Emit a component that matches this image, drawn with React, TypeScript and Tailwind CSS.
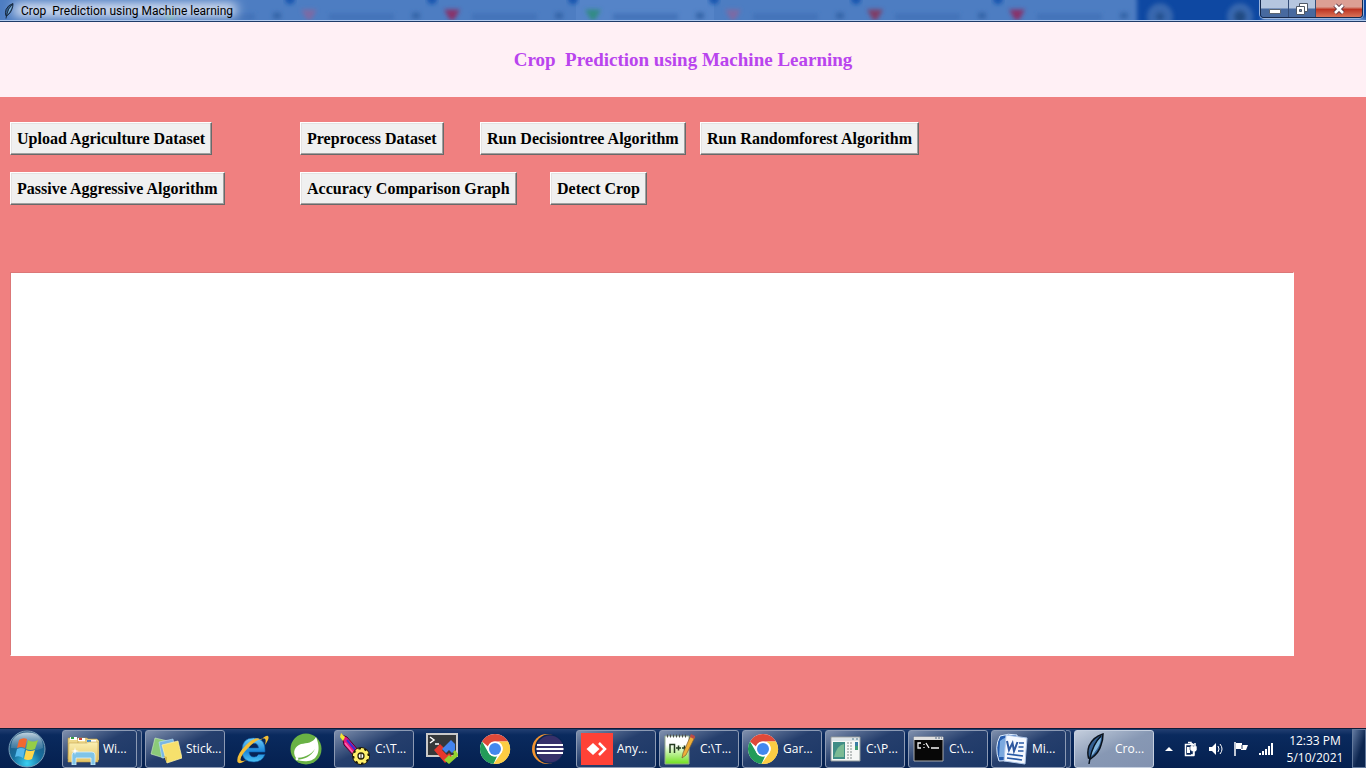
import React from "react";

type ArtProps = { children: React.ReactNode };

function Art({ children }: ArtProps) {
  return (
    <svg viewBox="0 0 32 32" className="h-8 w-8 shrink-0" aria-hidden="true">
      {children}
    </svg>
  );
}

function FolderIcon() {
  return (
    <Art>
      <defs>
        <linearGradient id="folder" x1="0" y1="0" x2="0" y2="1">
          <stop offset="0" stopColor="#fbf0b4" />
          <stop offset="1" stopColor="#e5c463" />
        </linearGradient>
      </defs>
      <path d="M1 5h9l2 2v19H1z" fill="#efd98a" stroke="#b9973f" strokeWidth=".6" />
      <path d="M3 4h7v3H3z" fill="#fff" />
      <path d="M4 4h3v2H4z" fill="#35a044" />
      <path d="M11 5h9l2 2v19H11z" fill="#f3df95" stroke="#c1a04a" strokeWidth=".6" />
      <path d="M11 5h7v3h-7z" fill="#fff" />
      <path d="M12 5h3v2h-3z" fill="#cf4432" />
      <path d="M19 6h11l2 2v19H19z" fill="#f5e3a0" stroke="#c1a04a" strokeWidth=".6" />
      <path d="M20 7h9v3h-9z" fill="#fff" />
      <path d="M20 7h4v2h-4z" fill="#3d8fd0" />
      <path d="M2 10h18l2-1h9v20H1z" fill="url(#folder)" stroke="#c2a34f" strokeWidth=".6" />
      <path d="M5 32V22q0-3 3-3h17q3 0 3 3v10h-4v-7H9v7z" fill="#7fc4e8" stroke="#d9f1fb" strokeWidth=".8" />
      <path d="M8 14l.7 3.300 3.300.7-3.300.7L8 22l-.7-3.300L4 18l3.300-.7z" fill="#fff" />
    </Art>
  );
}

function StickyIcon() {
  return (
    <Art>
      <path d="M5 5l13 3-4 17-13-4z" fill="#8bcb79" stroke="#d0ecc5" strokeWidth=".6" />
      <path d="M9 9l14-3 3 16-14 3z" fill="#79b7e4" stroke="#bfe0f6" strokeWidth=".6" />
      <path d="M12 12l16-4 4 17-15 5q-1-3-2-7z" fill="#f6e06c" stroke="#fff4ae" strokeWidth=".7" />
      <path d="M17 30l0-6-3-1z" fill="#d9bc45" />
    </Art>
  );
}

function ExplorerIcon() {
  return (
    <Art>
      <defs>
        <linearGradient id="ie" x1="0" y1="0" x2="0" y2="1">
          <stop offset="0" stopColor="#73d0fa" />
          <stop offset=".55" stopColor="#1b86d8" />
          <stop offset="1" stopColor="#4cc3f4" />
        </linearGradient>
      </defs>
      <path
        d="M28 19H12q.5 5 5 5 3 0 4.500-2.500H28Q25 29 17 29 5 29 5 17.500 5 5 16.500 5 29 5 28 19zM12 15h9.500q-.5-4.800-4.800-4.800T12 15z"
        fill="url(#ie)"
        stroke="#0d5aa8"
        strokeWidth=".6"
      />
      <path d="M24 7q5-5 7-4 2 2-3 9 1.500-6-.5-6.500Q21 5 12 14 3 23 3.500 27q1 2 6 0-7 5-9 2Q-1 22 9 12T24 7z" fill="#f2bd36" />
    </Art>
  );
}

function SpringIcon() {
  return (
    <Art>
      <circle cx="16" cy="16" r="15.500" fill="#69b245" />
      <path d="M26 4c5 11 3 23-8 24-5 1-9-1-11-1 7-1 14-3 18-11-4 6-12 9-19 9-4-6-1-12 5-14 6-1 12-1 15-7z" fill="#fff" />
      <circle cx="7" cy="26" r="1.400" fill="#fff" />
    </Art>
  );
}

function PaintToolIcon() {
  return (
    <Art>
      <path d="M3 2l5 2 12 14-5 5L5 12z" fill="#e8147c" stroke="#4a0731" />
      <path d="M8 7l10 12" stroke="#3430d4" strokeWidth="2" />
      <path d="M6 10l9 11" stroke="#ff69b0" strokeWidth="1.500" />
      <path d="M2 0l4 4-2 4-3-4z" fill="#f2e634" />
      <circle cx="22" cy="23" r="7" fill="none" stroke="#221d07" strokeWidth="4" />
      <circle cx="22" cy="23" r="6.800" fill="#fff06a" stroke="#fff06a" strokeWidth="2.600" strokeDasharray="3 2.300" />
      <circle cx="22" cy="23" r="3" fill="#fff" stroke="#292309" strokeWidth="1.300" />
      <path d="M22 20v6" stroke="#292309" />
    </Art>
  );
}

function TerminalBlocksIcon() {
  return (
    <Art>
      <path d="M0 0h32v24H0z" fill="#c9c9c9" />
      <path d="M2 2h28v20H2z" fill="#35383a" />
      <path d="M4 4l4 3-4 3M9 11h4" fill="none" stroke="#fff" strokeWidth="1.500" />
      <path d="M8 17l6-6 4 4-2 2 5 5 2-2 3 3-7 7z" fill="#e6382d" />
      <path d="M18 14l7-7 4 4v6l-3 3-3-3-3 3-4-4z" fill="#4384ee" />
      <path d="M18 27l5-5 2 2 3-3-1-2 2-2 3 4v2l-9 8z" fill="#94d22f" />
    </Art>
  );
}

function ChromeIcon() {
  return (
    <Art>
      <circle cx="16" cy="16" r="15" fill="#fff" />
      <path d="M3 8.500A15 15 0 0 1 29 8.500H16a7.500 7.500 0 0 0-7 5z" fill="#df4939" />
      <path d="M3 8.500l6.500 11.250A7.500 7.500 0 0 0 18 23.200L14.500 31A15 15 0 0 1 3 8.500z" fill="#239c59" />
      <path d="M29 8.500A15 15 0 0 1 14.500 31l8-11.250A7.500 7.500 0 0 0 20 9V8.500z" fill="#fccd43" />
      <circle cx="16" cy="16" r="7.500" fill="#fff" />
      <circle cx="16" cy="16" r="6" fill="#4388ee" />
    </Art>
  );
}

function EclipseIcon() {
  return (
    <Art>
      <circle cx="15" cy="16" r="15" fill="#f39430" />
      <circle cx="17.500" cy="16" r="14.800" fill="#0a2555" />
      <circle cx="18" cy="16" r="13.500" fill="#37306a" />
      <path d="M5 12h26M4.500 16h27M5 20h26" stroke="#fff" strokeWidth="1.800" />
    </Art>
  );
}

function AnyDeskIcon() {
  return (
    <Art>
      <path d="M0 0h32v32H0z" fill="#ff4237" />
      <path d="M12 10l6.500 6-6.500 6-6.500-6z" fill="#fff" />
      <path d="M18 10l6 6-6 6" fill="none" stroke="#fff" strokeWidth="2.500" />
    </Art>
  );
}

function NotepadIcon() {
  return (
    <Art>
      <defs>
        <linearGradient id="note" x1="0" y1="0" x2="0" y2="1">
          <stop offset=".3" stopColor="#fff" />
          <stop offset="1" stopColor="#6fe01c" />
        </linearGradient>
      </defs>
      <path d="M1 3h24v28H1z" fill="url(#note)" stroke="#98ad8f" />
      <path d="M3 3h20" stroke="#4d4d4d" strokeWidth="3" strokeDasharray="1 2" />
      <path d="M6 20V11.500h4.500V20M12 15h5M14.500 12.500v5M18 15h5M20.500 12.500v5" fill="none" stroke="#253b20" strokeWidth="1.500" />
      <path d="M27 2l4 2-9 18-4 3 1-5z" fill="#efae38" stroke="#7d5c2f" strokeWidth=".7" />
      <path d="M27 1l4 2-1 3-4-2z" fill="#b94a4a" />
    </Art>
  );
}

function WindowDocIcon() {
  return (
    <Art>
      <path d="M1 4h29v24H1z" fill="#f6f7f6" stroke="#8f9899" />
      <path d="M2 5h27v3H2z" fill="#dde5e8" />
      <path d="M22 6h2M26 6h2" stroke="#577e91" />
      <path d="M3 9h12v17H3z" fill="#408d86" />
      <path d="M4 24Q7 12 14 11v13z" fill="#7bba94" />
      <path d="M17 10h5M17 13h5M17 16h5M17 19h5M17 22h5M17 25h5" stroke="#858e8d" strokeDasharray="2 1" />
      <path d="M25 9h3v8h-3z" fill="#3d9b75" />
      <path d="M25 9h3v4h-3z" fill="#397ca4" />
    </Art>
  );
}

function ConsoleIcon() {
  return (
    <Art>
      <path d="M1 4h29v24H1z" fill="#070707" stroke="#aaa" />
      <path d="M1 4h29v3H1z" fill="#dfdfdf" />
      <path d="M22 5h2M25 5h2M28 5h1" stroke="#536b84" />
      <path d="M8 10H5v5h3M11 11v1M11 14v1M13 10l3 5M18 15h8" fill="none" stroke="#f5f5f5" strokeWidth="1.300" />
    </Art>
  );
}

function WordIcon() {
  return (
    <Art>
      <path d="M4 3q8-3 17-1l2 25-20 1Q-2 14 4 3z" fill="#255bad" stroke="#e1efff" />
      <path d="M4 8q6-5 15-4v20H3z" fill="#7ba9df" />
      <path d="M10 2l21 3-2 26-21-3z" fill="#f4f8ff" stroke="#adc5e8" />
      <path d="M11 8l2 9 3.500-7 1.500 8 3.500-9" fill="none" stroke="#2d579f" strokeWidth="2" />
      <path d="M23 10h5M22.500 14h5M22 18h5.500M11 21l16 2M11 25l15 2" stroke="#285aa6" strokeWidth="1.700" />
    </Art>
  );
}

function Feather() {
  return (
    <>
      <path d="M24 1Q14 4 10 13q-2 6-.5 12l2 1Q20 20 22 12q2-5 2-11z" fill="#345f91" stroke="#09111b" strokeWidth="1.500" />
      <path d="M22 4q-6 5-9 15l-2 5q4-3 7-8 4-6 4-12z" fill="#83b5dc" />
      <path d="M22 3q-8 8-11 22l-1 6" fill="none" stroke="#081421" strokeWidth="1.500" />
    </>
  );
}

function FeatherIcon() {
  return (
    <Art>
      <Feather />
    </Art>
  );
}

function StartOrb() {
  return (
    <svg viewBox="0 0 38 38" className="h-[38px] w-[38px]" aria-hidden="true">
      <defs>
        <radialGradient id="orb" cx=".5" cy=".9" r=".9">
          <stop offset="0" stopColor="#39d0f2" />
          <stop offset=".45" stopColor="#176f9e" />
          <stop offset="1" stopColor="#24507a" />
        </radialGradient>
        <linearGradient id="shine" x1="0" y1="0" x2="0" y2="1">
          <stop offset="0" stopColor="#dceaf2" stopOpacity=".85" />
          <stop offset="1" stopColor="#7fa9c4" stopOpacity=".2" />
        </linearGradient>
      </defs>
      <circle cx="19" cy="19" r="18" fill="url(#orb)" stroke="#7ba0b9" />
      <path d="M3 18Q3 3 19 2.500T35 18q-8 4-16 2T3 18z" fill="url(#shine)" />
      <path d="M11 10q4-3 8-1l-2 9q-4-2-8 0z" fill="#f26830" />
      <path d="M20 10q5 3 10 0l-3 9q-4 2-9 0z" fill="#95cd47" />
      <path d="M9 19q4-2 8 0l-2 9q-4-3-8-1z" fill="#55b9ec" />
      <path d="M18 20q4 2 9 0l-3 9q-4 2-8 0z" fill="#fed64b" />
    </svg>
  );
}

function TitleBackdrop() {
  const separators = [290, 432, 573, 714, 856, 998];
  const marks: [number, string][] = [
    [170, "#4ca18b"],
    [309, "#7c6aa4"],
    [452, "#893069"],
    [593, "#318b84"],
    [733, "#7c6aa4"],
    [875, "#803d66"],
    [1017, "#893069"],
  ];
  return (
    <svg viewBox="0 0 1366 20" preserveAspectRatio="none" className="absolute inset-0 h-full w-full" aria-hidden="true">
      <defs>
        <filter id="soft" x="-20%" y="-50%" width="140%" height="200%">
          <feGaussianBlur stdDeviation="2" />
        </filter>
        <filter id="glow" x="-20%" y="-100%" width="140%" height="300%">
          <feGaussianBlur stdDeviation="6 4" />
        </filter>
      </defs>
      <path d="M0 0h1366v20H0z" fill="#0e48a2" />
      <path d="M-10-10H1130q7 0 7 12v28H-10z" fill="#4d7dc2" filter="url(#soft)" />
      <path d="M576 0h138v20H576z" fill="#5584c8" />
      {separators.map((x) => (
        <circle key={x} cx={x} cy="-1" r="5" fill="#1755af" filter="url(#soft)" />
      ))}
      <g filter="url(#soft)">
        {marks.map(([x, color]) => (
          <g key={x}>
            <path d={`M${x - 8} 9h16l-6 10h-4z`} fill={color} />
            <path d={`M${x + 20} 16h65`} stroke="#4272b8" strokeWidth="6" />
            <path d={`M${x + 103} 15h8`} stroke="#3565a8" strokeWidth="6" />
          </g>
        ))}
        <circle cx="1160" cy="16" r="13" fill="#3868af" />
        <circle cx="1160" cy="16" r="4" fill="#25518f" />
        <circle cx="1240" cy="16" r="13" fill="#3868af" />
        <circle cx="1240" cy="16" r="6" fill="#244b83" />
        <path d="M1262 17h104v5h-104z" fill="#7da0d5" />
      </g>
      <path d="M14 2h222v15H14z" fill="#c5d3eb" filter="url(#glow)" />
    </svg>
  );
}

function TitleBar() {
  return (
    <div className="relative flex h-[22px] shrink-0 items-start justify-between border-b border-[#203b68] bg-[#4d7dc2]">
      <TitleBackdrop />
      <div className="relative flex h-[21px] items-center gap-1 pl-px">
        <svg viewBox="0 0 32 32" className="h-4 w-4" aria-hidden="true">
          <Feather />
        </svg>
        <span className="font-[Roboto,'Open_Sans',sans-serif] text-[12px] leading-4 whitespace-pre text-black">Crop  Prediction using Machine learning</span>
      </div>
      <div className="absolute inset-x-0 bottom-0 h-px bg-[#b3cbed]" />
      <div className="relative mr-[3px] flex h-[18px] overflow-hidden rounded-b-[4px] border border-t-0 border-[#16294d] shadow-[0_0_0_1px_#9ab4dc]">
        <button aria-label="Minimize" className="flex w-7 items-center justify-center border-r border-[#344d77] bg-linear-to-b from-[#b5c6df] from-45% to-[#47699f] to-55%">
          <svg viewBox="0 0 14 12" className="h-3 w-[14px]">
            <path d="M1.500 6.500h11v4h-11z" fill="#fff" stroke="#5c6673" />
          </svg>
        </button>
        <button aria-label="Restore" className="flex w-[27px] items-center justify-center border-r border-[#344d77] bg-linear-to-b from-[#b5c6df] from-45% to-[#47699f] to-55%">
          <svg viewBox="0 0 14 14" className="h-[14px] w-[14px]">
            <path d="M4.500 1.500h8v8h-8z" fill="#fff" stroke="#4f5967" />
            <path d="M1.500 4.500h8v8h-8z" fill="#fff" stroke="#4f5967" />
            <path d="M4.500 7.500h2v2h-2z" fill="#708ab2" stroke="#4f5967" />
          </svg>
        </button>
        <button aria-label="Close" className="flex w-[46px] items-center justify-center bg-linear-to-b from-[#dc9f94] from-40% via-[#bd3322] via-55% to-[#d97258]">
          <svg viewBox="0 0 14 12" className="h-3 w-[14px]">
            <path d="M3 2l8 8M11 2l-8 8" stroke="#5a3440" strokeWidth="4.500" />
            <path d="M3 2l8 8M11 2l-8 8" stroke="#fff" strokeWidth="2.600" />
          </svg>
        </button>
      </div>
    </div>
  );
}

function ToolButton({ children }: ArtProps) {
  return (
    <button className="h-[33px] border border-t-white border-r-[#696969] border-b-[#696969] border-l-white bg-[#f0f0f0] px-[6px] font-['Liberation_Serif',serif] text-[16px] leading-[18px] font-bold whitespace-nowrap text-black shadow-[inset_-1px_-1px_0_#a0a0a0,inset_1px_1px_0_#e3e3e3]">
      {children}
    </button>
  );
}

type TaskProps = { icon: React.ReactNode; label: string; stacked?: boolean; active?: boolean };

function Task({ icon, label, stacked = false, active = false }: TaskProps) {
  const surface = active
    ? "bg-linear-to-br from-[#c4cedd] via-[#8798b4] to-[#8292b0] border-[#c5cfdf]"
    : "bg-linear-to-br from-[#8090ad] via-[#263f6d] via-45% to-[#1b3766] border-[#8c9ab4]";
  return (
    <div className="flex h-[38px] w-20 shrink-0">
      <button className={`flex min-w-0 flex-1 items-center gap-1 overflow-hidden rounded-[3px] border pl-1 ${surface}`}>
        {icon}
        <span className="text-[12px] leading-4 whitespace-nowrap text-white">{label}</span>
      </button>
      {stacked && <span className="w-[5px] rounded-r-[3px] border border-l-0 border-[#7283a3] bg-[#243e6b]" />}
    </div>
  );
}

function PinnedApp({ icon, label }: { icon: React.ReactNode; label: string }) {
  return (
    <button aria-label={label} className="flex h-[38px] w-[50px] shrink-0 items-center justify-center">
      {icon}
    </button>
  );
}

function Tray() {
  return (
    <div className="flex h-full shrink-0 items-center text-white">
      <div className="mr-1 flex items-center gap-[9px]">
        <svg viewBox="0 0 10 6" className="h-[6px] w-[10px]" aria-hidden="true">
          <path d="M1 5h8L5 1z" fill="#fff" />
        </svg>
        <svg viewBox="0 0 16 16" className="h-4 w-4" aria-hidden="true">
          <path d="M2.500 3.500h8v11h-8zM5 1.500h3v2" fill="none" stroke="#fff" strokeWidth="1.500" />
          <path d="M4 6h3v6H4z" fill="#fff" />
          <path d="M7 5h7v4q-1 2-3 2t-4-2z" fill="#fff" stroke="#102b59" strokeWidth=".6" />
          <path d="M9 2v4M12 2v4M11 10v4H8" fill="none" stroke="#fff" strokeWidth="1.500" />
        </svg>
        <svg viewBox="0 0 16 16" className="h-4 w-4" aria-hidden="true">
          <path d="M1 6h3l4-4v12l-4-4H1z" fill="#fff" />
          <path d="M10 5q2 3 0 6M12 3q4 5 0 10" fill="none" stroke="#fff" />
        </svg>
        <svg viewBox="0 0 16 16" className="h-4 w-4" aria-hidden="true">
          <path d="M2 1v14" stroke="#fff" strokeWidth="1.500" />
          <path d="M3 2h6v2h6l-2 5H8V8H3z" fill="#fff" />
          <path d="M9 4v4" stroke="#263f69" />
        </svg>
        <svg viewBox="0 0 16 16" className="h-4 w-4" aria-hidden="true">
          <path d="M2 12v2M5 10v4M8 8v6M11 5v9M14 2v12" stroke="#fff" strokeWidth="2" />
        </svg>
      </div>
      <div className="w-[74px] text-center text-[12px] leading-[17px]">
        <div>12:33 PM</div>
        <div>5/10/2021</div>
      </div>
      <button aria-label="Show desktop" className="h-full w-[14px] border border-[#63799c] bg-linear-to-br from-[#6279a0] to-[#0c254f] to-60%" />
    </div>
  );
}

export default function App() {
  return (
    <div className="flex min-h-screen flex-col bg-[#f08080] font-['Open_Sans','Noto_Sans',sans-serif]">
      <TitleBar />
      <header className="flex h-[75px] shrink-0 items-center justify-center bg-[#fff0f5]">
        <h1 className="font-['Liberation_Serif',serif] text-[19px] leading-6 font-bold whitespace-pre text-[#b944ee]">
          Crop  Prediction using Machine Learning
        </h1>
      </header>
      <main className="flex flex-1 flex-col pt-[25px] pr-[72px] pb-[72px] pl-[10px]">
        <div className="flex">
          <div className="w-[290px]">
            <ToolButton>Upload Agriculture Dataset</ToolButton>
          </div>
          <div className="w-[180px]">
            <ToolButton>Preprocess Dataset</ToolButton>
          </div>
          <div className="w-[220px]">
            <ToolButton>Run Decisiontree Algorithm</ToolButton>
          </div>
          <ToolButton>Run Randomforest Algorithm</ToolButton>
        </div>
        <div className="mt-[17px] flex">
          <div className="w-[290px]">
            <ToolButton>Passive Aggressive Algorithm</ToolButton>
          </div>
          <div className="w-[250px]">
            <ToolButton>Accuracy Comparison Graph</ToolButton>
          </div>
          <ToolButton>Detect Crop</ToolButton>
        </div>
        <textarea
          aria-label="Output"
          className="mt-[67px] w-full flex-1 resize-none border border-t-[#dc7777] border-r-white border-b-white border-l-[#dc7777] bg-white p-1 font-['Liberation_Serif',serif] text-[16px] font-bold text-black outline-none"
        />
      </main>
      <footer className="flex h-10 shrink-0 items-center border-t border-[#101d38] bg-linear-to-b from-[#223f72] from-0% via-[#0a2a5e] via-15% to-[#05204f]">
        <button aria-label="Start" className="mr-4 ml-2 shrink-0">
          <StartOrb />
        </button>
        <nav aria-label="Taskbar" className="flex flex-1 items-center gap-[3px]">
          <Task icon={<FolderIcon />} label="Wi..." stacked />
          <Task icon={<StickyIcon />} label="Stick..." />
          <PinnedApp icon={<ExplorerIcon />} label="Internet Explorer" />
          <PinnedApp icon={<SpringIcon />} label="Spring" />
          <Task icon={<PaintToolIcon />} label="C:\T..." />
          <PinnedApp icon={<TerminalBlocksIcon />} label="Terminal" />
          <PinnedApp icon={<ChromeIcon />} label="Chrome" />
          <PinnedApp icon={<EclipseIcon />} label="Eclipse" />
          <Task icon={<AnyDeskIcon />} label="Any..." />
          <Task icon={<NotepadIcon />} label="C:\T..." />
          <Task icon={<ChromeIcon />} label="Gar..." />
          <Task icon={<WindowDocIcon />} label="C:\P..." />
          <Task icon={<ConsoleIcon />} label="C:\..." />
          <Task icon={<WordIcon />} label="Mi..." stacked />
          <Task icon={<FeatherIcon />} label="Cro..." active />
        </nav>
        <Tray />
      </footer>
    </div>
  );
}
